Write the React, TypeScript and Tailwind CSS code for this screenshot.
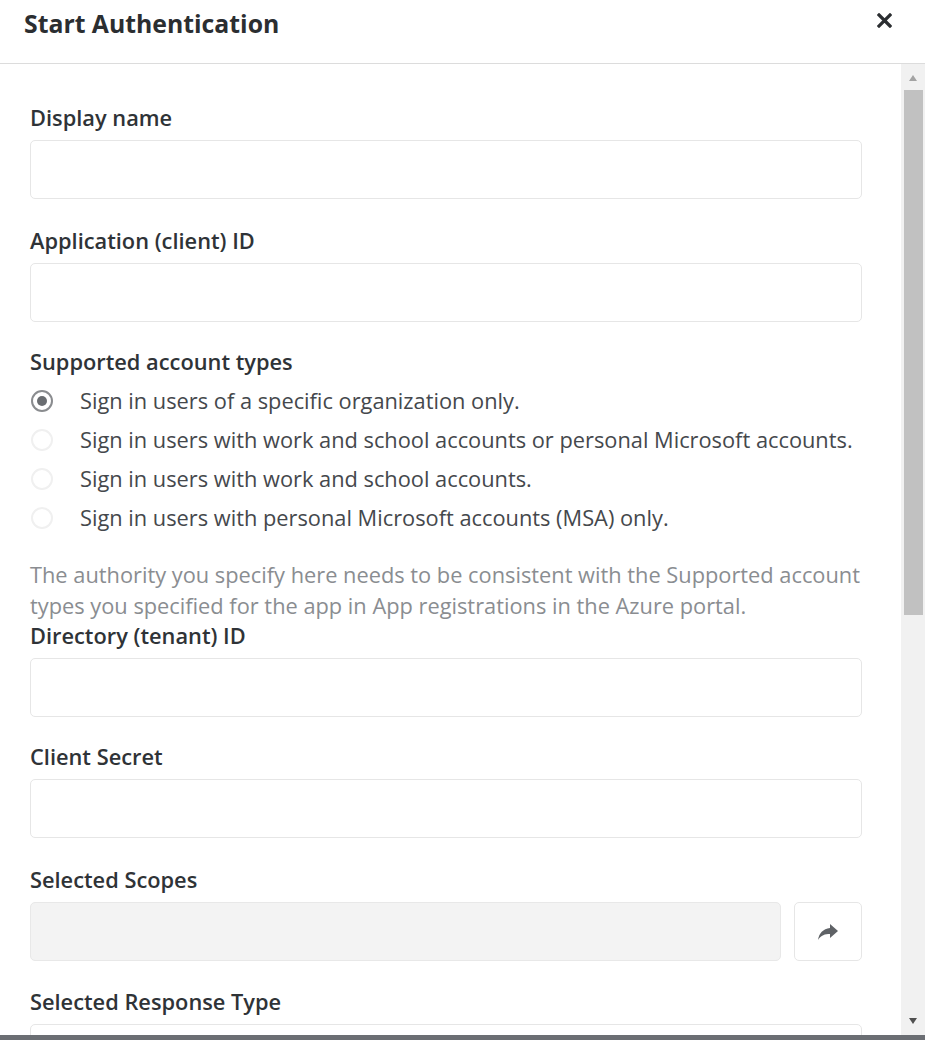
import React from 'react';

const font = { fontFamily: '"Open Sans", "Noto Sans", sans-serif' };

const Field: React.FC<{ label: string; className?: string }> = ({ label, className }) => (
  <div className={className}>
    <label className="block text-[21.8px] leading-[30px] font-semibold text-[#2f3337]">{label}</label>
    <div className="mt-[7px] h-[59px] rounded-[5px] border border-[#e6e6e6] bg-white" />
  </div>
);

const accountTypes = [
  'Sign in users of a specific organization only.',
  'Sign in users with work and school accounts or personal Microsoft accounts.',
  'Sign in users with work and school accounts.',
  'Sign in users with personal Microsoft accounts (MSA) only.',
];

const Radio: React.FC<{ checked: boolean }> = ({ checked }) =>
  checked ? (
    <span className="flex h-[22px] w-[22px] items-center justify-center rounded-full border-2 border-[#8a8c8f] bg-white">
      <span className="h-[10px] w-[10px] rounded-full bg-[#6a6d71]" />
    </span>
  ) : (
    <span className="h-[22px] w-[22px] rounded-full border-2 border-[#f0f0f0] bg-white" />
  );

export default function App() {
  return (
    <div style={font} className="flex h-[1040px] w-[925px] flex-col overflow-hidden bg-white">
      <div className="flex h-[64px] shrink-0 items-start justify-between border-b border-[#dcdcdc] pl-[24px] pr-[33px]">
        <h1 className="mt-[6px] text-[24.8px] leading-[34px] font-bold text-[#2b2e31]">Start Authentication</h1>
        <button className="mt-[13px]" aria-label="Close">
          <svg width="15" height="15" viewBox="0 0 15 15">
            <path d="M2 2 L13 13 M13 2 L2 13" stroke="#2b2e31" strokeWidth="3.2" strokeLinecap="square" />
          </svg>
        </button>
      </div>

      <div className="flex min-h-0 flex-1">
        <div className="min-w-0 flex-1 overflow-hidden pl-[30px] pr-[39px] pt-[39px]">
          <Field label="Display name" />
          <Field label="Application (client) ID" className="mt-[27px]" />

          <div className="mt-[25px]">
            <div className="text-[21.8px] leading-[30px] font-semibold text-[#2f3337]">Supported account types</div>
            <div className="mt-[4px] flex flex-col">
              {accountTypes.map((t, i) => (
                <div key={t} className="flex h-[39px] items-center">
                  <span className="ml-[1px] mr-[27px] flex w-[22px] justify-center">
                    <Radio checked={i === 0} />
                  </span>
                  <span className="text-[21.8px] leading-[30px] text-[#45484c]">{t}</span>
                </div>
              ))}
            </div>
          </div>

          <p className="mt-[22px] text-[21.8px] leading-[31px] text-[#8a8d91]">
            The authority you specify here needs to be consistent with the Supported account types you specified for the app in App registrations in the Azure portal.
          </p>

          <Field label="Directory (tenant) ID" />
          <Field label="Client Secret" className="mt-[25px]" />

          <div className="mt-[27px]">
            <label className="block text-[21.8px] leading-[30px] font-semibold text-[#2f3337]">Selected Scopes</label>
            <div className="mt-[7px] flex gap-[13px]">
              <div className="h-[59px] flex-1 rounded-[5px] border border-[#e8e8e8] bg-[#f3f3f3]" />
              <button className="flex h-[59px] w-[68px] items-center justify-center rounded-[5px] border border-[#e6e6e6] bg-white">
                <svg width="22" height="18" viewBox="0 0 22 18">
                  <path d="M13 1 L21 8 L13 15 L13 11 C8 11 4 12 1 17 C2 10 6 6 13 5 Z" fill="#5f6266" />
                </svg>
              </button>
            </div>
          </div>

          <Field label="Selected Response Type" className="mt-[26px]" />
        </div>

        <div className="flex w-[24px] shrink-0 flex-col items-center bg-[#f1f1f1] pt-[8px] pb-[10px]">
          <svg width="10" height="8" viewBox="0 0 10 8" className="mt-[2px]">
            <path d="M5 1 L9 7 L1 7 Z" fill="#a3a3a3" />
          </svg>
          <div className="mt-[8px] h-[525px] w-[19px] bg-[#c1c1c1]" />
          <div className="flex-1" />
          <svg width="10" height="8" viewBox="0 0 10 8">
            <path d="M1 1 L9 1 L5 7 Z" fill="#505050" />
          </svg>
        </div>
      </div>

      <div className="h-[5px] shrink-0 bg-[#6b6e73]" />
    </div>
  );
}
